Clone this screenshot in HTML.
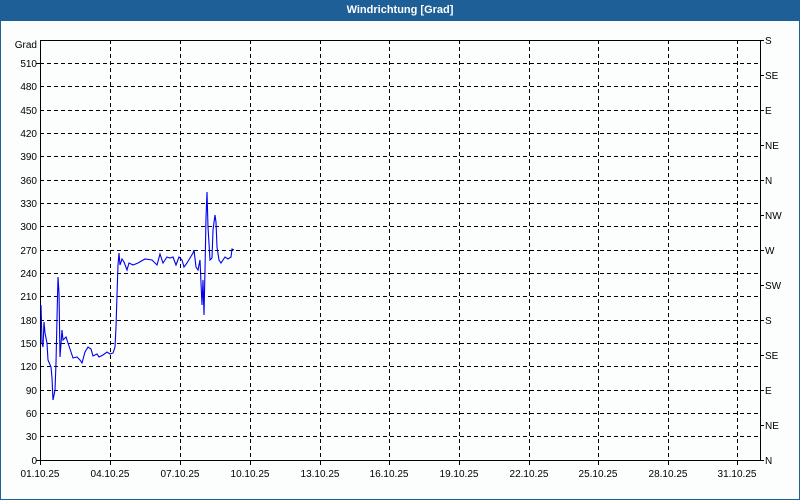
<!DOCTYPE html>
<html><head><meta charset="utf-8"><style>
html,body{margin:0;padding:0;width:800px;height:500px;overflow:hidden;background:#fff}
.win{position:absolute;left:0;top:0;width:798px;height:498px;border:1px solid #1e5f97;background:#fcfdfd}
.title{position:absolute;left:0;top:0;width:800px;height:21px;background:#1e5f97;color:#fff;font:bold 11px "Liberation Sans",sans-serif;text-align:center;line-height:20px}
svg{position:absolute;left:0;top:0}
text{font-family:"Liberation Sans",sans-serif;font-size:10px;fill:#000}
</style></head><body>
<div class="win"></div>
<div class="title">Windrichtung [Grad]</div>
<svg width="800" height="500">
<g stroke="#000" stroke-dasharray="4,3" stroke-width="1">
<line x1="40" y1="63.5" x2="760" y2="63.5"/><line x1="40" y1="86.5" x2="760" y2="86.5"/><line x1="40" y1="110.5" x2="760" y2="110.5"/><line x1="40" y1="133.5" x2="760" y2="133.5"/><line x1="40" y1="156.5" x2="760" y2="156.5"/><line x1="40" y1="180.5" x2="760" y2="180.5"/><line x1="40" y1="203.5" x2="760" y2="203.5"/><line x1="40" y1="226.5" x2="760" y2="226.5"/><line x1="40" y1="250.5" x2="760" y2="250.5"/><line x1="40" y1="273.5" x2="760" y2="273.5"/><line x1="40" y1="296.5" x2="760" y2="296.5"/><line x1="40" y1="320.5" x2="760" y2="320.5"/><line x1="40" y1="343.5" x2="760" y2="343.5"/><line x1="40" y1="366.5" x2="760" y2="366.5"/><line x1="40" y1="390.5" x2="760" y2="390.5"/><line x1="40" y1="413.5" x2="760" y2="413.5"/><line x1="40" y1="436.5" x2="760" y2="436.5"/>
<line x1="110.5" y1="40" x2="110.5" y2="460"/><line x1="180.5" y1="40" x2="180.5" y2="460"/><line x1="250.5" y1="40" x2="250.5" y2="460"/><line x1="320.5" y1="40" x2="320.5" y2="460"/><line x1="389.5" y1="40" x2="389.5" y2="460"/><line x1="459.5" y1="40" x2="459.5" y2="460"/><line x1="529.5" y1="40" x2="529.5" y2="460"/><line x1="598.5" y1="40" x2="598.5" y2="460"/><line x1="668.5" y1="40" x2="668.5" y2="460"/><line x1="737.5" y1="40" x2="737.5" y2="460"/>
</g>
<rect x="40.5" y="40.5" width="720" height="420" fill="none" stroke="#000"/>
<g stroke="#000">
<line x1="36" y1="63.5" x2="40" y2="63.5"/><line x1="36" y1="460.5" x2="40" y2="460.5"/>
<line x1="40.5" y1="460" x2="40.5" y2="465"/><line x1="110.5" y1="460" x2="110.5" y2="465"/><line x1="180.5" y1="460" x2="180.5" y2="465"/><line x1="250.5" y1="460" x2="250.5" y2="465"/><line x1="320.5" y1="460" x2="320.5" y2="465"/><line x1="389.5" y1="460" x2="389.5" y2="465"/><line x1="459.5" y1="460" x2="459.5" y2="465"/><line x1="529.5" y1="460" x2="529.5" y2="465"/><line x1="598.5" y1="460" x2="598.5" y2="465"/><line x1="668.5" y1="460" x2="668.5" y2="465"/><line x1="737.5" y1="460" x2="737.5" y2="465"/>
<line x1="760" y1="40.5" x2="764" y2="40.5"/><line x1="760" y1="75.5" x2="764" y2="75.5"/><line x1="760" y1="110.5" x2="764" y2="110.5"/><line x1="760" y1="145.5" x2="764" y2="145.5"/><line x1="760" y1="180.5" x2="764" y2="180.5"/><line x1="760" y1="215.5" x2="764" y2="215.5"/><line x1="760" y1="250.5" x2="764" y2="250.5"/><line x1="760" y1="285.5" x2="764" y2="285.5"/><line x1="760" y1="320.5" x2="764" y2="320.5"/><line x1="760" y1="355.5" x2="764" y2="355.5"/><line x1="760" y1="390.5" x2="764" y2="390.5"/><line x1="760" y1="425.5" x2="764" y2="425.5"/><line x1="760" y1="460.5" x2="764" y2="460.5"/>
</g>
<g text-anchor="end">
<text x="37" y="48">Grad</text>
<text x="37" y="67">510</text><text x="37" y="90">480</text><text x="37" y="114">450</text><text x="37" y="137">420</text><text x="37" y="160">390</text><text x="37" y="184">360</text><text x="37" y="207">330</text><text x="37" y="230">300</text><text x="37" y="254">270</text><text x="37" y="277">240</text><text x="37" y="300">210</text><text x="37" y="324">180</text><text x="37" y="347">150</text><text x="37" y="370">120</text><text x="37" y="394">90</text><text x="37" y="417">60</text><text x="37" y="440">30</text><text x="37" y="464">0</text>
</g>
<g>
<text x="765" y="44">S</text><text x="765" y="79">SE</text><text x="765" y="114">E</text><text x="765" y="149">NE</text><text x="765" y="184">N</text><text x="765" y="219">NW</text><text x="765" y="254">W</text><text x="765" y="289">SW</text><text x="765" y="324">S</text><text x="765" y="359">SE</text><text x="765" y="394">E</text><text x="765" y="429">NE</text><text x="765" y="464">N</text>
</g>
<g text-anchor="middle">
<text x="40" y="477">01.10.25</text><text x="110" y="477">04.10.25</text><text x="180" y="477">07.10.25</text><text x="250" y="477">10.10.25</text><text x="320" y="477">13.10.25</text><text x="389" y="477">16.10.25</text><text x="459" y="477">19.10.25</text><text x="529" y="477">22.10.25</text><text x="598" y="477">25.10.25</text><text x="668" y="477">28.10.25</text><text x="737" y="477">31.10.25</text>
</g>
<polyline fill="none" stroke="#0000ee" stroke-width="1.1" points="41,305 42,343 43,347 44,322 45,333 47,343 48,360 51,367 52,378 53,400 55,390 56,363 57,318 58,277 59,293 60,357 62,330 63,340 66,337 68,343 71,352 73,358 77,357 80,360 82,363 85,352 88,347 91,349 93,356 97,354 99,357 103,355 107,352 110,354 113,353 115,347 116,327 117,295 118,265 119,253 120,265 122,259 124,262 127,270 129,263 133,265 138,263 145,259 152,260 157,265 160,254 163,263 167,257 170,258 173,257 176,265 179,257 182,260 184,267 187,263 190,258 193,253 194,250 196,267 198,270 200,260 201,283 202,305 203,280 204,315 205,270 206,218 207,192 208,227 210,260 212,258 213,230 215,215 216,222 217,247 219,260 221,263 223,260 225,257 228,259 231,257 232,249 234,250"/>
</svg>
</body></html>
